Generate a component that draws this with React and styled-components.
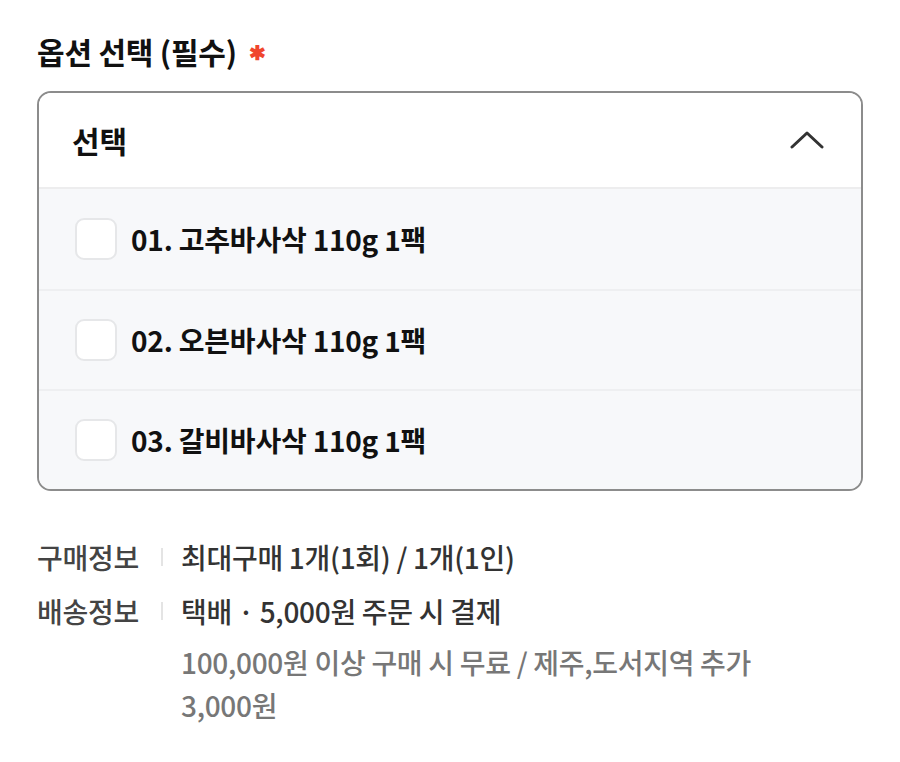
import styled, { createGlobalStyle } from "styled-components";

const GlobalStyle = createGlobalStyle`
  body {
    margin: 0;
    background: #ffffff;
    font-family: "Noto Sans CJK KR", "Noto Sans", sans-serif;
    color: #111;
  }
`;

const Page = styled.div`
  width: 900px;
  padding: 28px 37px 0 37px;
  box-sizing: border-box;
`;

const Title = styled.h2`
  margin: 0 0 18px 0;
  font-size: 30px;
  font-weight: 700;
  letter-spacing: -0.2px;
  display: flex;
  align-items: center;
  gap: 12px;
  height: 45px;
`;

const Required = styled.span`
  color: #f0462d;
  font-size: 20px;
  line-height: 1;
  margin-top: 2px;
`;

const Select = styled.div`
  width: 826px;
  border: 2px solid #8c8c8c;
  border-radius: 14px;
  overflow: hidden;
  box-sizing: border-box;
`;

const Header = styled.div`
  height: 94px;
  display: flex;
  align-items: center;
  justify-content: space-between;
  padding: 0 37px 0 33px;
  background: #fff;
  border-bottom: 2px solid #ededee;
  font-size: 30px;
  font-weight: 700;
`;

const Option = styled.label`
  height: 100px;
  display: flex;
  align-items: center;
  gap: 14px;
  padding: 0 36px;
  background: #f7f8fa;
  font-size: 28px;
  font-weight: 700;
  letter-spacing: -0.2px;
  box-sizing: border-box;
  border-top: ${(p) => (p.first ? "none" : "2px solid #eeeff1")};
`;

const Box = styled.span`
  width: 42px;
  height: 42px;
  border-radius: 9px;
  border: 2px solid #e6e7e9;
  background: #fff;
  box-sizing: border-box;
  flex-shrink: 0;
`;

const Info = styled.div`
  margin-top: 42px;
  display: grid;
  grid-template-columns: 124px 20px 1fr;
  row-gap: 6px;
  font-size: 28px;
  letter-spacing: -0.3px;
`;

const Label = styled.div`
  color: #444;
  font-weight: 500;
  line-height: 48px;
  white-space: nowrap;
`;

const Bar = styled.div`
  display: flex;
  align-items: center;
  height: 48px;
  &::before {
    content: "";
    width: 2px;
    height: 18px;
    background: #e4e4e4;
  }
`;

const Value = styled.div`
  color: ${(p) => (p.muted ? "#777" : "#333")};
  font-weight: 500;
  line-height: ${(p) => (p.muted ? "43px" : "48px")};
  grid-column: 3;
  max-width: 620px;
`;

const items = ["01. 고추바사삭 110g 1팩", "02. 오븐바사삭 110g 1팩", "03. 갈비바사삭 110g 1팩"];

export default function App() {
  return (
    <Page>
      <GlobalStyle />
      <Title>
        옵션 선택 (필수) <Required>✱</Required>
      </Title>
      <Select>
        <Header>
          선택
          <svg width="34" height="20" viewBox="0 0 34 20" fill="none">
            <path d="M2 17L17 3L32 17" stroke="#333" strokeWidth="3" strokeLinecap="round" strokeLinejoin="round" />
          </svg>
        </Header>
        {items.map((t, i) => (
          <Option key={t} first={i === 0}>
            <Box />
            {t}
          </Option>
        ))}
      </Select>
      <Info>
        <Label>구매정보</Label>
        <Bar />
        <Value>최대구매 1개(1회) / 1개(1인)</Value>
        <Label>배송정보</Label>
        <Bar />
        <Value>택배 · 5,000원 주문 시 결제</Value>
        <Value muted>100,000원 이상 구매 시 무료 / 제주,도서지역 추가 3,000원</Value>
      </Info>
    </Page>
  );
}
